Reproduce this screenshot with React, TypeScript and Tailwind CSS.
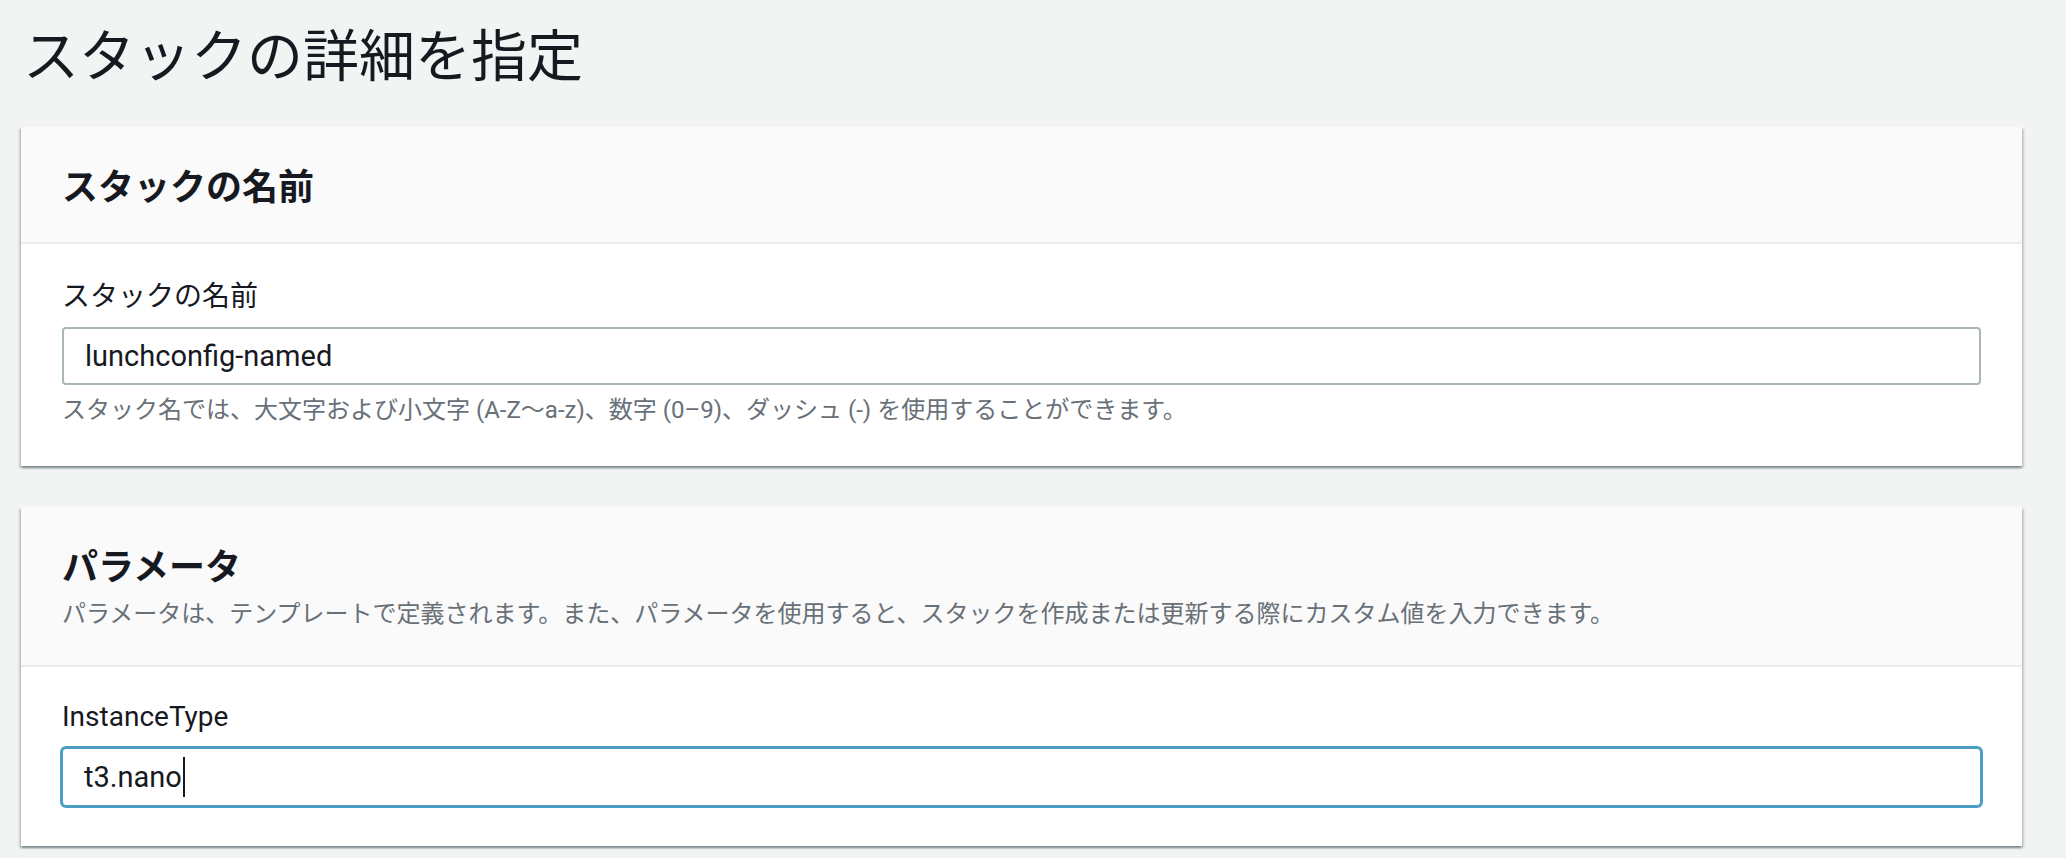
import React from "react";

const cjk = "font-['Noto_Sans_CJK_JP',sans-serif]";
const mixed = "font-['Roboto','Noto_Sans_CJK_JP',sans-serif]";

const cardShadow =
  "shadow-[0_2px_2px_0_rgba(0,28,36,0.3),2px_2px_2px_0_rgba(0,28,36,0.15),-2px_2px_2px_0_rgba(0,28,36,0.15)]";

function Card({ header, children }: { header: React.ReactNode; children: React.ReactNode }) {
  return (
    <section className={`bg-white ${cardShadow}`}>
      <div className="bg-[#fafafa] border-b-2 border-[#eaeded] px-[41px] pt-[39px]">{header}</div>
      <div className="px-[41px]">{children}</div>
    </section>
  );
}

function FakeInput({ value, focused }: { value: string; focused?: boolean }) {
  return (
    <div
      className={
        focused
          ? "h-[58px] flex items-center px-[21px] bg-white rounded-[4px] border border-[#4a9dc3] shadow-[0_0_0_2px_#4a9dc3]"
          : "h-[58px] flex items-center px-[21px] bg-white rounded-[4px] border-2 border-[#aab7b8]"
      }
    >
      <span className={`${mixed} text-[29px] leading-none text-[#16191f]`}>{value}</span>
      {focused && <span className="ml-[1px] inline-block w-[2px] h-[40px] bg-[#16191f]" />}
    </div>
  );
}

export default function App() {
  return (
    <div className="min-h-screen bg-[#f2f3f3] pl-[21px] pr-[44px] pb-[40px]">
      {/* ページタイトル */}
      <h1 className={`${cjk} pt-[24px] pl-[2px] text-[56px] leading-none font-normal text-[#16191f]`}>
        スタックの詳細を指定
      </h1>

      <div className="mt-[47px] flex flex-col gap-[41px]">
        {/* スタックの名前 */}
        <Card
          header={
            <h2 className={`${cjk} pb-[40px] text-[36px] leading-none font-bold text-[#16191f]`}>
              スタックの名前
            </h2>
          }
        >
          <div className="pt-[36px] pb-[44px]">
            <label className={`${cjk} block text-[28px] leading-none text-[#16191f]`}>スタックの名前</label>
            <div className="mt-[19px]">
              <FakeInput value="lunchconfig-named" />
            </div>
            <p className={`${mixed} mt-[13px] text-[24px] leading-none text-[#687078]`}>
              スタック名では、大文字および小文字 (A-Z〜a-z)、数字 (0–9)、ダッシュ (-) を使用することができます。
            </p>
          </div>
        </Card>

        {/* パラメータ */}
        <Card
          header={
            <div className="pb-[41px]">
              <h2 className={`${cjk} text-[36px] leading-none font-bold text-[#16191f]`}>パラメータ</h2>
              <p className={`${cjk} mt-[18px] text-[24px] leading-none text-[#687078]`}>
                パラメータは、テンプレートで定義されます。また、パラメータを使用すると、スタックを作成または更新する際にカスタム値を入力できます。
              </p>
            </div>
          }
        >
          <div className="pt-[36px] pb-[40px]">
            <label className={`${mixed} block text-[28px] leading-none text-[#16191f]`}>InstanceType</label>
            <div className="mt-[17px]">
              <FakeInput value="t3.nano" focused />
            </div>
          </div>
        </Card>
      </div>
    </div>
  );
}
